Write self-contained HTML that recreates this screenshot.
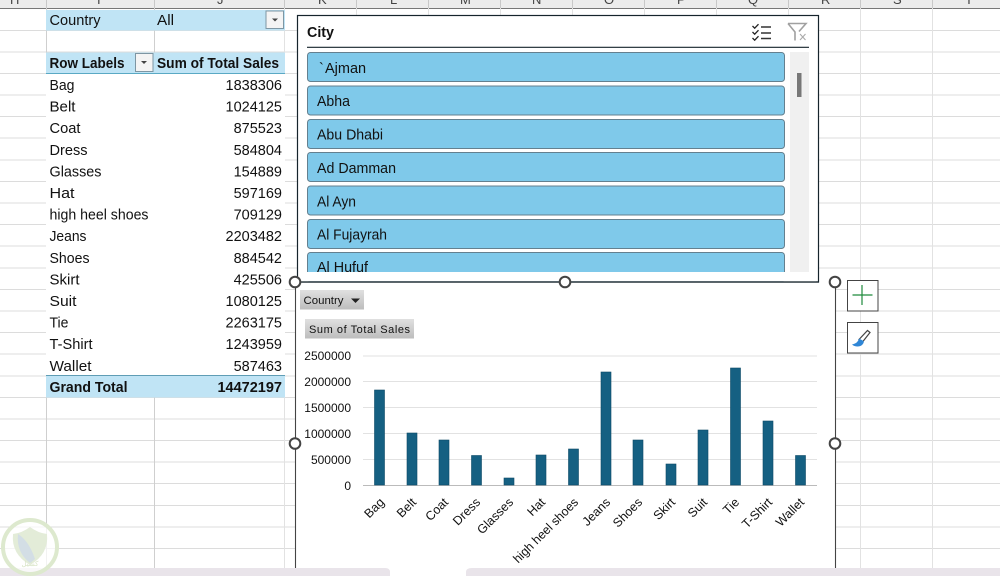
<!DOCTYPE html>
<html><head><meta charset="utf-8"><style>
html,body{margin:0;padding:0;background:#fff;width:1000px;height:576px;overflow:hidden}
svg{display:block}
#r{filter:blur(.3px)}
text{font-family:"Liberation Sans",sans-serif;fill:#111}
.c{font-size:14.5px}
.b{font-size:14.5px;font-weight:bold}
.ax{font-size:12px;fill:#333}
.xl{font-size:12.5px;fill:#333;text-anchor:end}
.hl{stroke:#dcdcdc;stroke-width:1}
.vl{stroke:#e2e2e2;stroke-width:1}
.it{fill:#7fc9ea;stroke:#64808f;stroke-width:1}
.bar{fill:#156082;stroke:#0e4a66;stroke-width:.6}
.h{fill:#fff;stroke:#444;stroke-width:2}
</style></head><body>
<svg id="r" width="1000" height="576" viewBox="0 0 1000 576" xmlns="http://www.w3.org/2000/svg">
<defs><linearGradient id="g" x1="0" y1="0" x2="0" y2="1"><stop offset="0" stop-color="#e0e0e0"/><stop offset="1" stop-color="#bdbdbd"/></linearGradient></defs>
<rect width="1000" height="576" fill="#fff"/>
<!-- column header -->
<rect width="1000" height="8.500" fill="#ececec"/>
<g font-size="13"><text x="10" y="4" style="fill:#444">H</text><text x="97" y="4" style="fill:#444">I</text><text x="217" y="4" style="fill:#444">J</text><text x="318" y="4" style="fill:#444">K</text><text x="390" y="4" style="fill:#444">L</text><text x="460" y="4" style="fill:#444">M</text><text x="532" y="4" style="fill:#444">N</text><text x="604" y="4" style="fill:#444">O</text><text x="677" y="4" style="fill:#444">P</text><text x="748" y="4" style="fill:#444">Q</text><text x="821" y="4" style="fill:#444">R</text><text x="893" y="4" style="fill:#444">S</text><text x="965" y="4" style="fill:#444">T</text></g>
<path d="M46.500 0V8M154.500 0V8M284.500 0V8M356.500 0V8M428.500 0V8M500.500 0V8M572.500 0V8M644.500 0V8M716.500 0V8M788.500 0V8M860.500 0V8M932.500 0V8" stroke="#c8c8c8"/>
<line x1="0" y1="8.500" x2="1000" y2="8.500" stroke="#777" stroke-width="1"/>
<!-- grid -->
<g class="hl">
<line x1="0" x2="1000" y1="30.500" y2="30.500"/><line x1="0" x2="1000" y1="52" y2="52"/><line x1="0" x2="1000" y1="73.500" y2="73.500"/><line x1="0" x2="1000" y1="95" y2="95"/><line x1="0" x2="1000" y1="116.500" y2="116.500"/><line x1="0" x2="1000" y1="138" y2="138"/><line x1="0" x2="1000" y1="160" y2="160"/><line x1="0" x2="1000" y1="181.500" y2="181.500"/><line x1="0" x2="1000" y1="203" y2="203"/><line x1="0" x2="1000" y1="224.500" y2="224.500"/><line x1="0" x2="1000" y1="246" y2="246"/><line x1="0" x2="1000" y1="268" y2="268"/><line x1="0" x2="1000" y1="289.500" y2="289.500"/><line x1="0" x2="1000" y1="311" y2="311"/><line x1="0" x2="1000" y1="332.500" y2="332.500"/><line x1="0" x2="1000" y1="354" y2="354"/><line x1="0" x2="1000" y1="376" y2="376"/><line x1="0" x2="1000" y1="397.500" y2="397.500"/><line x1="0" x2="1000" y1="419" y2="419"/><line x1="0" x2="1000" y1="440.500" y2="440.500"/><line x1="0" x2="1000" y1="462" y2="462"/><line x1="0" x2="1000" y1="483.500" y2="483.500"/><line x1="0" x2="1000" y1="505.500" y2="505.500"/><line x1="0" x2="1000" y1="527" y2="527"/><line x1="0" x2="1000" y1="548.500" y2="548.500"/>
</g>
<g class="vl">
<line x1="46.500" x2="46.500" y1="8" y2="568" style="stroke:#cfcfcf"/><line x1="154.500" x2="154.500" y1="8" y2="568" style="stroke:#cfcfcf"/><line x1="284.500" x2="284.500" y1="8" y2="568"/><line x1="860.500" x2="860.500" y1="8" y2="568"/><line x1="932.500" x2="932.500" y1="8" y2="568"/>
<line x1="356.500" x2="356.500" y1="8" y2="16"/><line x1="428.500" x2="428.500" y1="8" y2="16"/><line x1="500.500" x2="500.500" y1="8" y2="16"/><line x1="572.500" x2="572.500" y1="8" y2="16"/><line x1="644.500" x2="644.500" y1="8" y2="16"/><line x1="716.500" x2="716.500" y1="8" y2="16"/><line x1="788.500" x2="788.500" y1="8" y2="16"/>
</g>
<!-- pivot -->
<rect x="46" y="74" width="239" height="302" fill="#fff"/>
<rect x="46" y="10" width="239" height="20.500" fill="#c0e4f5"/>
<rect x="46" y="52.500" width="239" height="21" fill="#c0e4f5"/>
<line x1="46" x2="285" y1="73.500" y2="73.500" stroke="#5aa9c4"/>
<rect x="46" y="376" width="239" height="21.500" fill="#c0e4f5"/>
<line x1="46" x2="285" y1="375.500" y2="375.500" stroke="#5f9db5"/>
<rect x="266" y="11" width="17.500" height="17.500" fill="#f4f4f4" stroke="#7e96a3"/>
<path d="M272 18.500h6l-3 3z" fill="#444"/>
<rect x="135.500" y="53.500" width="17.500" height="18" fill="#f4f4f4" stroke="#7e96a3"/>
<path d="M141 61h6l-3 3z" fill="#444"/>
<text class="c" x="49.500" y="25" textLength="51" lengthAdjust="spacingAndGlyphs">Country</text>
<text class="c" x="157" y="25" textLength="17" lengthAdjust="spacingAndGlyphs">All</text>
<text class="b" x="49.500" y="68" textLength="75" lengthAdjust="spacingAndGlyphs">Row Labels</text>
<text class="b" x="157" y="68" textLength="122" lengthAdjust="spacingAndGlyphs">Sum of Total Sales</text>
<g class="c">
<text x="49.500" y="90" textLength="25" lengthAdjust="spacingAndGlyphs">Bag</text><text x="49.500" y="111.500" textLength="26" lengthAdjust="spacingAndGlyphs">Belt</text><text x="49.500" y="133" textLength="31" lengthAdjust="spacingAndGlyphs">Coat</text><text x="49.500" y="155" textLength="38" lengthAdjust="spacingAndGlyphs">Dress</text><text x="49.500" y="176.500" textLength="52" lengthAdjust="spacingAndGlyphs">Glasses</text><text x="49.500" y="198" textLength="25" lengthAdjust="spacingAndGlyphs">Hat</text><text x="49.500" y="219.500" textLength="99" lengthAdjust="spacingAndGlyphs">high heel shoes</text><text x="49.500" y="241" textLength="37" lengthAdjust="spacingAndGlyphs">Jeans</text><text x="49.500" y="263" textLength="40" lengthAdjust="spacingAndGlyphs">Shoes</text><text x="49.500" y="284.500" textLength="30" lengthAdjust="spacingAndGlyphs">Skirt</text><text x="49.500" y="306" textLength="27" lengthAdjust="spacingAndGlyphs">Suit</text><text x="49.500" y="327.500" textLength="19" lengthAdjust="spacingAndGlyphs">Tie</text><text x="49.500" y="349" textLength="43" lengthAdjust="spacingAndGlyphs">T-Shirt</text><text x="49.500" y="371" textLength="42" lengthAdjust="spacingAndGlyphs">Wallet</text>
</g>
<g class="c" text-anchor="end">
<text x="282" y="90">1838306</text><text x="282" y="111.500">1024125</text><text x="282" y="133">875523</text><text x="282" y="155">584804</text><text x="282" y="176.500">154889</text><text x="282" y="198">597169</text><text x="282" y="219.500">709129</text><text x="282" y="241">2203482</text><text x="282" y="263">884542</text><text x="282" y="284.500">425506</text><text x="282" y="306">1080125</text><text x="282" y="327.500">2263175</text><text x="282" y="349">1243959</text><text x="282" y="371">587463</text>
</g>
<text class="b" x="49.500" y="392" textLength="78" lengthAdjust="spacingAndGlyphs">Grand Total</text>
<text class="b" x="282" y="392" text-anchor="end">14472197</text>
<!-- chart -->
<rect x="295.500" y="282" width="540" height="286" fill="#fff"/>
<path d="M295.500 282V568M835.500 282V568" stroke="#444" stroke-width="1.100" fill="none"/>
<rect x="300" y="290" width="64" height="19.500" fill="url(#g)"/>
<text x="303.500" y="304" font-size="11" textLength="40" lengthAdjust="spacingAndGlyphs">Country</text>
<path d="M351 298.500h9l-4.500 4.500z" fill="#222"/>
<rect x="305" y="319" width="109" height="19.500" fill="url(#g)"/>
<text x="309" y="333" font-size="11" textLength="101" lengthAdjust="spacing">Sum of Total Sales</text>
<g stroke="#e2e2e2"><line x1="363" x2="817" y1="356" y2="356"/><line x1="363" x2="817" y1="381.500" y2="381.500"/><line x1="363" x2="817" y1="407.500" y2="407.500"/><line x1="363" x2="817" y1="433.500" y2="433.500"/><line x1="363" x2="817" y1="459.500" y2="459.500"/></g>
<line x1="363" x2="817" y1="485.500" y2="485.500" stroke="#bbb"/>
<g class="ax" text-anchor="end"><text x="351" y="360">2500000</text><text x="351" y="386">2000000</text><text x="351" y="412">1500000</text><text x="351" y="438">1000000</text><text x="351" y="464">500000</text><text x="351" y="490">0</text></g>
<g class="bar">
<rect x="374.500" y="390" width="10" height="95"/><rect x="407" y="433" width="10" height="52"/><rect x="439" y="440" width="10" height="45"/><rect x="471.500" y="455.500" width="10" height="29.500"/><rect x="504" y="478" width="10" height="7"/><rect x="536" y="455" width="10" height="30"/><rect x="568.500" y="449" width="10" height="36"/><rect x="601" y="372" width="10" height="113"/><rect x="633" y="440" width="10" height="45"/><rect x="666" y="464" width="10" height="21"/><rect x="698" y="430" width="10" height="55"/><rect x="730.500" y="368" width="10" height="117"/><rect x="763" y="421" width="10" height="64"/><rect x="795.500" y="455.500" width="10" height="29.500"/>
</g>
<g class="xl">
<text transform="translate(385,503) rotate(-45)">Bag</text><text transform="translate(417,503) rotate(-45)">Belt</text><text transform="translate(449,503) rotate(-45)">Coat</text><text transform="translate(481,503) rotate(-45)">Dress</text><text transform="translate(514,503) rotate(-45)">Glasses</text><text transform="translate(546,503) rotate(-45)">Hat</text><text transform="translate(579,503) rotate(-45)" textLength="86" lengthAdjust="spacingAndGlyphs">high heel shoes</text><text transform="translate(611,503) rotate(-45)">Jeans</text><text transform="translate(643,503) rotate(-45)">Shoes</text><text transform="translate(676,503) rotate(-45)">Skirt</text><text transform="translate(708,503) rotate(-45)">Suit</text><text transform="translate(740,503) rotate(-45)">Tie</text><text transform="translate(773,503) rotate(-45)">T-Shirt</text><text transform="translate(805,503) rotate(-45)">Wallet</text>
</g>
<!-- slicer -->
<rect x="297.500" y="15.500" width="521" height="266.500" fill="#fff" stroke="#16242c" stroke-width="1.200"/>
<text x="307" y="37" font-size="14.500" font-weight="bold" textLength="27" lengthAdjust="spacingAndGlyphs">City</text>
<line x1="307" x2="809" y1="47.300" y2="47.300" stroke="#16242c" stroke-width="1.100"/>
<path d="M752.500 26l2.200 2.200 3.800-4M752.500 32l2.200 2.200 3.800-4M752.500 38l2.200 2.200 3.800-4" fill="none" stroke="#222" stroke-width="1.300"/>
<path d="M761 27h10M761 33h10M761 38.500h10" stroke="#333" stroke-width="1.400"/>
<path d="M788 23.500h18l-7 8M788 23.500l7 8.500v8.500" fill="none" stroke="#a0a0a0" stroke-width="1.600"/>
<path d="M800 34l5.500 6M805.500 34l-5.500 6" stroke="#aaa" stroke-width="1.100"/>
<g class="it">
<rect x="307.500" y="52.500" width="477" height="29" rx="3"/><rect x="307.500" y="86" width="477" height="29" rx="3"/><rect x="307.500" y="119.500" width="477" height="29" rx="3"/><rect x="307.500" y="152.500" width="477" height="29" rx="3"/><rect x="307.500" y="186" width="477" height="29" rx="3"/><rect x="307.500" y="219.500" width="477" height="29" rx="3"/><rect x="307.500" y="252.500" width="477" height="29" rx="3"/>
</g>
<rect x="300" y="272" width="516" height="9.300" fill="#fff"/>
<line x1="297" x2="819" y1="282" y2="282" stroke="#16242c" stroke-width="1.200"/>
<rect x="790" y="52" width="19" height="220" fill="#f0f0f0"/>
<rect x="797" y="73" width="4.500" height="24" fill="#777"/>
<g font-size="14.500">
<text x="319" y="73">`<tspan x="325">Ajman</tspan></text><text x="317" y="106" textLength="33" lengthAdjust="spacingAndGlyphs">Abha</text><text x="317" y="139.500" textLength="66" lengthAdjust="spacingAndGlyphs">Abu Dhabi</text><text x="317" y="173" textLength="79" lengthAdjust="spacingAndGlyphs">Ad Damman</text><text x="317" y="206.500" textLength="39" lengthAdjust="spacingAndGlyphs">Al Ayn</text><text x="317" y="239.500" textLength="70" lengthAdjust="spacingAndGlyphs">Al Fujayrah</text>
</g>
<svg x="300" y="255" width="200" height="17" viewBox="300 255 200 17"><text x="317" y="272" font-size="14.500" textLength="51" lengthAdjust="spacingAndGlyphs">Al Hufuf</text></svg>
<!-- handles -->
<circle class="h" cx="295" cy="282" r="5.300"/><circle class="h" cx="565" cy="282" r="5.300"/><circle class="h" cx="835" cy="282" r="5.300"/><circle class="h" cx="295" cy="443.500" r="5.300"/><circle class="h" cx="835" cy="443.500" r="5.300"/>
<!-- chart buttons -->
<rect x="847.500" y="280.500" width="30.500" height="30.500" fill="#fff" stroke="#444"/>
<path d="M852.500 295h20M862 285v20" stroke="#1f8a3c" stroke-width="1.200"/>
<rect x="847.500" y="322.500" width="30.500" height="30.500" fill="#fff" stroke="#444"/>
<path d="M859 339.500l8.500-9 2.500 2-7.500 9.500z" fill="#fff" stroke="#444" stroke-width="1.200"/>
<path d="M859 338.500c-1 3.500-3 5-7 6 2.500 2.500 8 2.500 10 .5 1.500-1.500 2.200-3 1.500-4z" fill="#2f86d6"/>
<!-- bottom bar -->
<path d="M0 576V568H385q5 0 5 4V576ZM1000 576V568H472q-6 0-6 4V576Z" fill="#e9e4ea"/>
<!-- watermark -->
<circle cx="30" cy="547" r="27" fill="#fff" fill-opacity=".72" stroke="#dde9ce" stroke-width="4"/>
<path d="M13 534q9-1 17-7q8 6 17 7q2 20-17 31q-19-11-17-31z" fill="#e3ecd8"/>
<path d="M18 534q11 7 17 25q-2 2-5 4q-14-11-12-29z" fill="#d3dee5"/>
<text x="30" y="566" font-size="7" text-anchor="middle" style="fill:#d8e4c6">كشيل</text>
</svg>
</body></html>
